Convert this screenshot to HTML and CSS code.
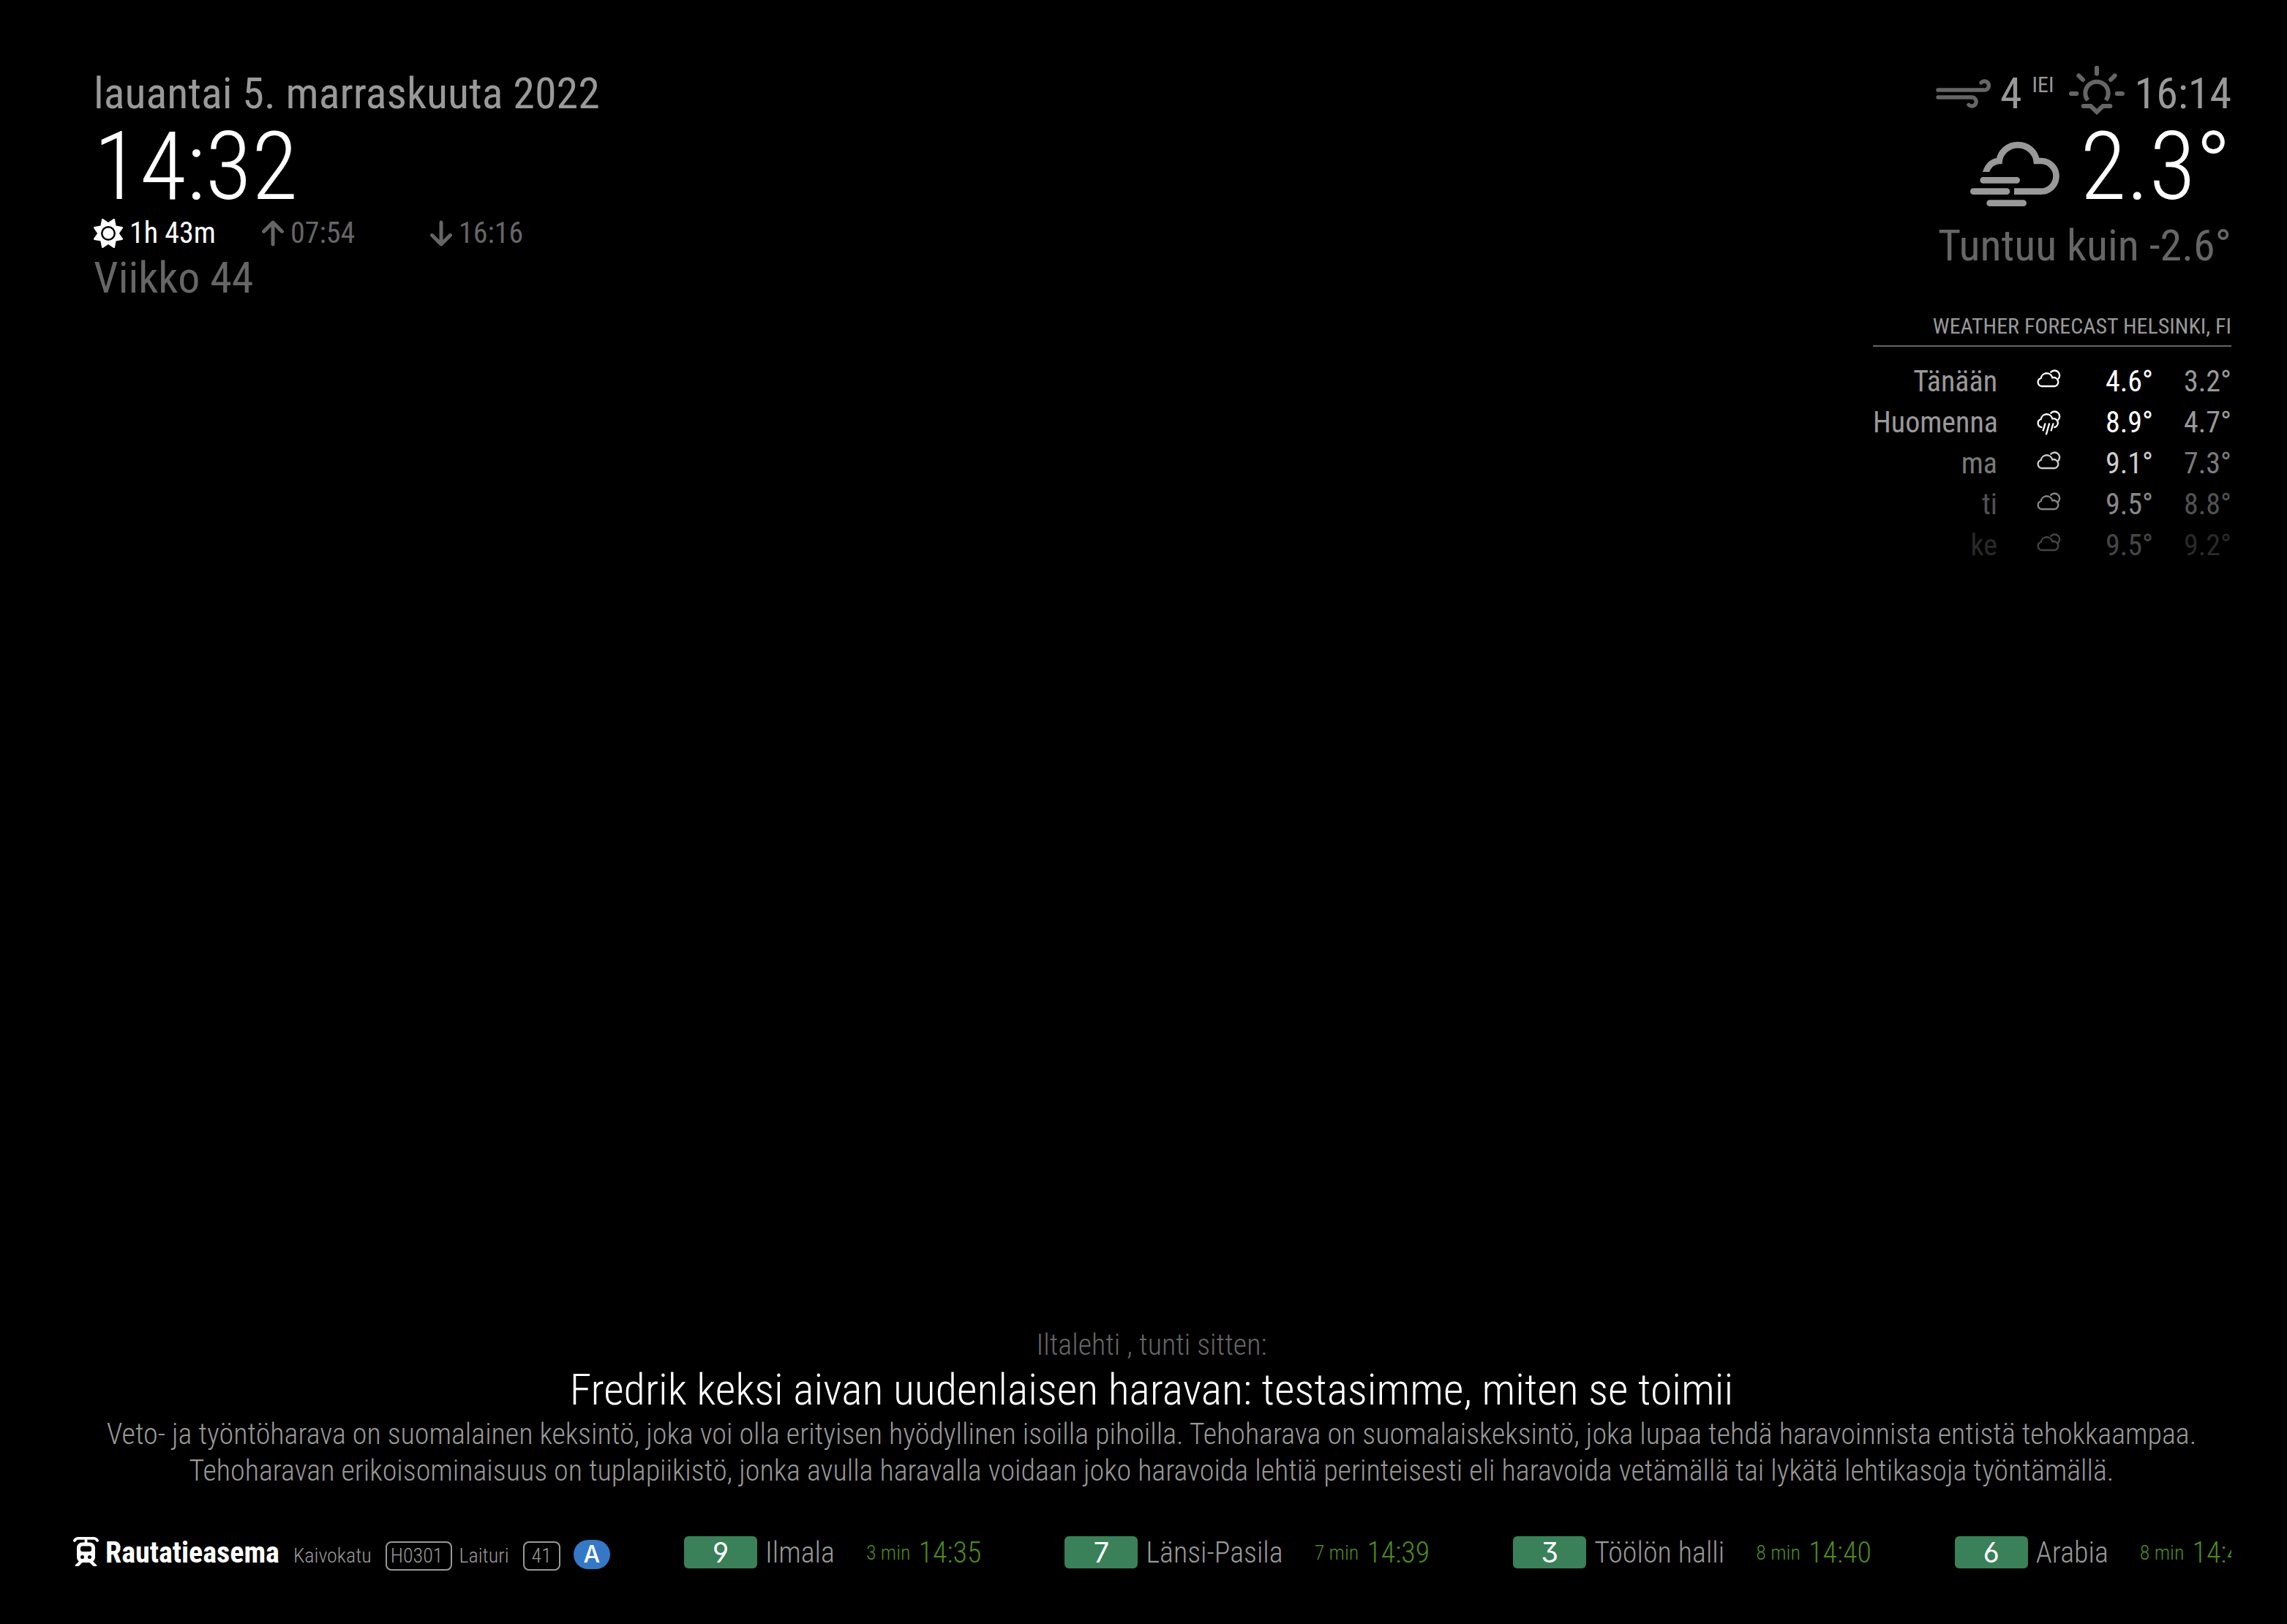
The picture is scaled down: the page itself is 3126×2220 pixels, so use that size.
FILE: index.html
```html
<!DOCTYPE html>
<html lang="fi">
<head>
<meta charset="utf-8">
<meta name="viewport" content="width=device-width, initial-scale=1">
<title>MagicMirror</title>
<link rel="stylesheet" href="styles.css">
</head>
<body>
<svg class="sprite" aria-hidden="true">
  <symbol id="cloudy" viewBox="0 0 102 102">
    <path d="M22 69A17 17 0 0 1 20 36A24 24 0 0 1 67 34A17 17 0 0 1 78 69ZM61 11A20 20 0 1 1 91 39"/>
  </symbol>
  <symbol id="rain" viewBox="0 0 102 102">
    <path d="M22 69A17 17 0 0 1 20 36A24 24 0 0 1 67 34A17 17 0 0 1 76 69M61 11A20 20 0 1 1 91 39M37 55L29 82M54 55L42 97M70 55L62 82"/>
  </symbol>
</svg>
<main class="mirror">
  <div class="top">
    <section class="clock">
      <div class="medium normal">lauantai 5. marraskuuta 2022</div>
      <div class="large bright light">14:32</div>
      <div class="sun-times">
        <span class="sun-item bright">
          <svg class="sun-icon" viewBox="0 0 512 512"><path d="M361.5 1.2c5 2.1 8.6 6.6 9.6 11.9L391 121l107.9 19.8c5.3 1 9.8 4.6 11.9 9.6s1.5 10.7-1.6 15.2L446.9 256l62.3 90.3c3.1 4.5 3.7 10.2 1.6 15.2s-6.6 8.6-11.9 9.6L391 391 371.1 498.9c-1 5.3-4.6 9.8-9.6 11.9s-10.7 1.5-15.2-1.6L256 446.9l-90.3 62.3c-4.5 3.1-10.2 3.7-15.2 1.6s-8.6-6.6-9.6-11.9L121 391 13.1 371.1c-5.3-1-9.8-4.6-11.9-9.6s-1.5-10.7 1.6-15.2L65.1 256 2.8 165.7c-3.1-4.5-3.7-10.2-1.6-15.2s6.6-8.6 11.9-9.6L121 121 140.9 13.1c1-5.3 4.6-9.8 9.6-11.9s10.7-1.5 15.2 1.6L256 65.1 346.3 2.8c4.5-3.1 10.2-3.7 15.2-1.6zM160 256a96 96 0 1 1 192 0 96 96 0 1 1 -192 0zm224 0a128 128 0 1 0 -256 0 128 128 0 1 0 256 0z"/></svg>
          1h 43m
        </span>
        <span class="sun-item dimmed">
          <svg class="arrow-icon" viewBox="0 0 384 512"><path d="M214.600 41.400c-12.500-12.500-32.800-12.500-45.300 0l-160 160c-12.500 12.500-12.500 32.800 0 45.300s32.800 12.500 45.300 0L160 141.200V448c0 17.700 14.300 32 32 32s32-14.300 32-32V141.200L329.400 246.600c12.500 12.500 32.800 12.500 45.300 0s12.500-32.800 0-45.300l-160-160z"/></svg>
          07:54
        </span>
        <span class="sun-item dimmed">
          <svg class="arrow-icon" viewBox="0 0 384 512"><path d="M169.400 470.600c12.500 12.500 32.800 12.500 45.300 0l160-160c12.500-12.500 12.500-32.800 0-45.300s-32.800-12.500-45.300 0L224 370.800 224 64c0-17.700-14.300-32-32-32s-32 14.300-32 32l0 306.700L54.600 265.400c-12.500-12.500-32.800-12.500-45.300 0s-12.500 32.800 0 45.300l160 160z"/></svg>
          16:16
        </span>
      </div>
      <div class="medium dimmed">Viikko 44</div>
    </section>

    <div class="weather">
      <section class="current">
        <div class="current-row medium normal">
          <svg class="wind-icon" viewBox="17 82 225 120"><path d="M26 127H214A18 18 0 1 0 203 97M26 157H164A18 18 0 1 1 152 188"/></svg>
          <span>4</span>
          <sup class="wind-direction">IEI</sup>
          <svg class="sunset-icon" viewBox="564 30 228 201"><path d="M678 38V62M573 144H595M761 144H783M604 70L621 87M752 70L735 87" stroke-linecap="round"/><path d="M641 171A47 47 0 1 1 715 171" stroke-linecap="butt"/><path d="M623 195H653L678 219L703 195H733" stroke-linecap="round"/></svg>
          <span>16:14</span>
        </div>
        <div class="temperature large bright light">
          <svg class="fog-icon" viewBox="156 336 366 270"><clipPath id="fog-cut"><path d="M156 330H530V610H330V465H156Z"/></clipPath><path clip-path="url(#fog-cut)" d="M214 490Q226 422 275 420A77 74 0 0 1 428 420H446A62 62 0 0 1 446 545H336"/><path d="M209 499H347M169 545H306M236 593H374" stroke-linecap="round"/></svg>
          <span>2.3°</span>
        </div>
        <div class="medium dimmed">Tuntuu kuin -2.6°</div>
      </section>

      <section class="forecast">
        <h2 class="forecast-title">Weather Forecast Helsinki, FI</h2>
        <table class="forecast-table">
          <tr><td class="day">Tänään</td><td class="icon"><svg><use href="#cloudy"/></svg></td><td class="max">4.6°</td><td class="min">3.2°</td></tr>
          <tr><td class="day">Huomenna</td><td class="icon"><svg><use href="#rain"/></svg></td><td class="max">8.9°</td><td class="min">4.7°</td></tr>
          <tr class="fade-1"><td class="day">ma</td><td class="icon"><svg><use href="#cloudy"/></svg></td><td class="max">9.1°</td><td class="min">7.3°</td></tr>
          <tr class="fade-2"><td class="day">ti</td><td class="icon"><svg><use href="#cloudy"/></svg></td><td class="max">9.5°</td><td class="min">8.8°</td></tr>
          <tr class="fade-3"><td class="day">ke</td><td class="icon"><svg><use href="#cloudy"/></svg></td><td class="max">9.5°</td><td class="min">9.2°</td></tr>
        </table>
      </section>
    </div>
  </div>

  <section class="news">
    <div class="news-source">Iltalehti , tunti sitten:</div>
    <h1 class="news-title">Fredrik keksi aivan uudenlaisen haravan: testasimme, miten se toimii</h1>
    <p class="news-text">Veto- ja työntöharava on suomalainen keksintö, joka voi olla erityisen hyödyllinen isoilla pihoilla. Tehoharava on suomalaiskeksintö, joka lupaa tehdä haravoinnista entistä tehokkaampaa. Tehoharavan erikoisominaisuus on tuplapiikistö, jonka avulla haravalla voidaan joko haravoida lehtiä perinteisesti eli haravoida vetämällä tai lykätä lehtikasoja työntämällä.</p>
  </section>

  <section class="transit">
    <div class="stop">
      <svg class="tram-icon" viewBox="0 0 448 512"><path d="M86.800 48c-12.200 0-23.600 5.500-31.200 15L42.700 79C34.500 89.300 19.400 91 9 82.700S-3 59.400 5.300 49L18 33C34.700 12.200 60 0 86.800 0H361.200c26.700 0 52 12.200 68.700 33l12.800 16c8.300 10.400 6.600 25.500-3.700 33.700s-25.500 6.600-33.700-3.700L392.500 63c-7.600-9.500-19.100-15-31.200-15H248V96h40c53 0 96 43 96 96V352c0 30.600-14.300 57.800-36.600 75.400l65.500 65.500c7.100 7.100 2.100 19.100-7.900 19.100H365.300c-8.500 0-16.600-3.400-22.600-9.400L288 448H160l-54.600 54.600c-6 6-14.100 9.400-22.600 9.400H43c-10 0-15-12.100-7.900-19.100l65.500-65.500C78.300 409.800 64 382.600 64 352V192c0-53 43-96 96-96h40V48H86.800zM160 160c-17.700 0-32 14.300-32 32v32c0 17.700 14.300 32 32 32H288c17.700 0 32-14.300 32-32V192c0-17.700-14.300-32-32-32H160zm32 192a32 32 0 1 0 -64 0 32 32 0 1 0 64 0zm96 32a32 32 0 1 0 0-64 32 32 0 1 0 0 64z"/></svg>
      <strong class="stop-name">Rautatieasema</strong>
      <span class="stop-street">Kaivokatu</span>
      <span class="stop-code">H0301</span>
      <span class="stop-label">Laituri</span>
      <span class="stop-platform">41</span>
      <span class="zone">A</span>
    </div>
    <div class="departures">
      <div class="departure"><span class="line">9</span><span class="destination">Ilmala</span><span class="minutes">3 min</span><span class="time">14:35</span></div>
      <div class="departure"><span class="line">7</span><span class="destination">Länsi-Pasila</span><span class="minutes">7 min</span><span class="time">14:39</span></div>
      <div class="departure"><span class="line">3</span><span class="destination">Töölön halli</span><span class="minutes">8 min</span><span class="time">14:40</span></div>
      <div class="departure"><span class="line">6</span><span class="destination">Arabia</span><span class="minutes">8 min</span><span class="time">14:40</span></div>
    </div>
  </section>
</main>
</body>
</html>
```
FILE: styles.css
```css
:root {
  --bright: #fff;
  --normal: #999;
  --dimmed: #666;
  --due: #4c8a1c;
}

* { box-sizing: border-box; }

body {
  margin: 0;
  background: #000;
  color: var(--normal);
  font-family: "Roboto Condensed", Roboto, sans-serif;
  font-size: 40px;
  line-height: 50px;
}

h1, h2, p { margin: 0; font-weight: inherit; }

.sprite { display: none; }

.mirror {
  display: flex;
  flex-direction: column;
  min-height: 100vh;
  padding: 93px 76px 72px 98px;
}

.medium { font-size: 60px; line-height: 70px; }
.large { font-size: 130px; line-height: 130px; }
.light { font-weight: 300; }
.bright { color: var(--bright); }
.normal { color: var(--normal); }
.dimmed { color: var(--dimmed); }

.top { display: flex; justify-content: space-between; }

/* Clock */
.clock { padding-left: 30px; }
.sun-times { display: grid; grid-template-columns: repeat(3, 230px); padding: 1px 0; }
.sun-item { display: flex; align-items: center; gap: 9px; }
.sun-icon, .arrow-icon, .tram-icon { height: 40px; fill: currentColor; }
.sun-icon { width: 40px; }
.arrow-icon { width: 30px; }
.tram-icon { width: 35px; flex: none; color: var(--bright); }

/* Current weather */
.weather { text-align: right; }
.current-row { display: flex; justify-content: flex-end; align-items: center; height: 70px; }
.wind-icon, .sunset-icon, .fog-icon { fill: none; stroke: var(--dimmed); }
.wind-icon { width: 75px; height: 40px; margin-right: 13px; stroke-width: 16; stroke-linecap: round; }
.wind-direction { align-self: flex-start; margin: 8px 20px 0 14px; font-size: 30px; line-height: 30px; }
.sunset-icon { width: 76px; height: 67px; margin: 0 14px 9px 0; stroke-width: 18; }
.temperature { display: flex; justify-content: flex-end; align-items: center; gap: 28px; margin-bottom: 8px; }
.fog-icon { width: 122px; height: 90px; margin-top: 18px; stroke: var(--normal); stroke-width: 26; }

/* Forecast */
.forecast { margin-top: 60px; }
.forecast-title {
  padding-bottom: 11px;
  margin-bottom: 20px;
  border-bottom: 2px solid var(--dimmed);
  font-size: 30px;
  line-height: 30px;
  text-transform: uppercase;
}
.forecast-table { width: 490px; margin-left: auto; border-collapse: collapse; table-layout: fixed; }
.forecast-table td { height: 56px; padding: 0; }
.forecast-table .day { width: 170px; }
.forecast-table .icon { width: 140px; text-align: center; }
.forecast-table .max { width: 73px; }
.forecast-table .min { width: 107px; }
.forecast-table .icon, .forecast-table .max { color: var(--bright); }
.forecast-table svg {
  display: block;
  width: 34px;
  height: 34px;
  margin: 0 auto;
  fill: none;
  stroke: currentColor;
  stroke-width: 7;
  stroke-linecap: round;
}
.fade-1 { opacity: 0.8; }
.fade-2 { opacity: 0.53; }
.fade-3 { opacity: 0.27; }

/* News */
.news { margin-top: auto; font-weight: 300; text-align: center; }
.news-source { color: var(--dimmed); }
.news-title { color: var(--bright); font-size: 60px; line-height: 72px; }

/* Transit */
.transit { display: flex; align-items: center; margin-top: 62px; font-weight: 300; white-space: nowrap; }
.stop { display: flex; flex: none; align-items: baseline; width: 837px; }
.tram-icon { align-self: center; margin: 0 9px 5px 2px; }
.stop-name { color: var(--bright); font-weight: 700; }
.stop-street, .stop-code, .stop-label, .stop-platform { font-size: 28px; line-height: 36px; }
.stop-street { margin-left: 19px; }
.stop-code, .stop-platform { border: 2px solid var(--normal); border-radius: 8px; }
.stop-code { margin: 0 9px 0 19px; padding: 0 11px 0 5px; }
.stop-platform { margin: 0 18px 0 19px; padding: 0 10px; }
.zone {
  width: 50px;
  border-radius: 20px;
  background: #3478c6;
  color: var(--bright);
  font-family: Inter, sans-serif;
  font-size: 32px;
  font-weight: 500;
  line-height: 40px;
  text-align: center;
}
.departures { display: flex; flex: 1; gap: 114px; min-width: 0; overflow: hidden; }
.departure { display: flex; flex: none; align-items: baseline; }
.line {
  width: 100px;
  margin-right: 11px;
  border-radius: 6px;
  background: #3a8058;
  color: var(--bright);
  font-family: Inter, sans-serif;
  font-size: 38px;
  font-weight: 400;
  font-feature-settings: "cv03", "cv04", "cv09";
  line-height: 44px;
  text-align: center;
}
.minutes { align-self: center; margin: 0 11px 0 43px; font-size: 28px; }
.minutes, .time { color: var(--due); }
```
